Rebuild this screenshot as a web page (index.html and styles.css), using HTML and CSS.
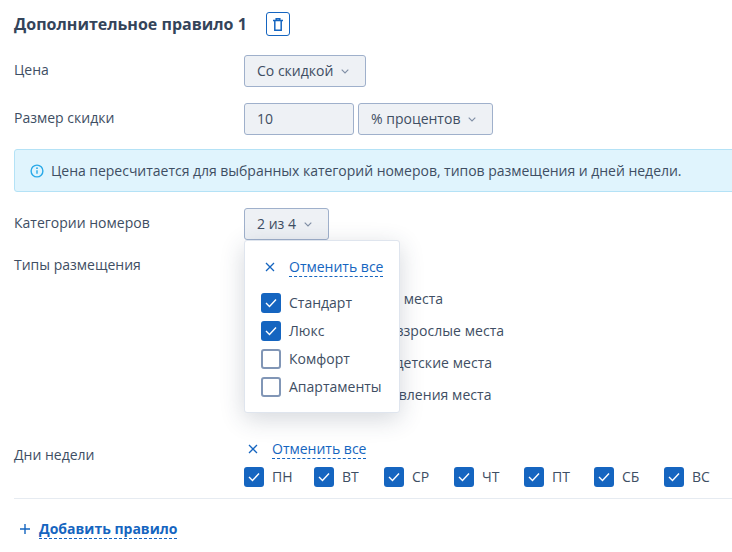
FILE: index.html
```
<!DOCTYPE html>
<html lang="ru">
<head>
<meta charset="utf-8">
<title>Дополнительное правило</title>
<link rel="stylesheet" href="styles.css">
</head>
<body>
<main class="page">
  <div class="rule-head">
    <h2 class="rule-title">Дополнительное правило 1</h2>
    <button class="icon-btn" type="button" aria-label="Удалить">
      <svg width="10" height="13" viewBox="0 0 10 13" fill="none" stroke="#1565c0" stroke-width="1.5"><path d="M0 2.5h10M3.2 2.4V.8h3.6v1.6M1.8 2.5v9.7h6.4V2.5"/></svg>
    </button>
  </div>

  <div class="row row-price">
    <div class="label">Цена</div>
    <button class="select" type="button">Со скидкой<svg class="chev" width="8" height="5" viewBox="0 0 8 5"><path d="M.7.7L4 4l3.3-3.3" fill="none" stroke="#7f8ea5" stroke-width="1.1"/></svg></button>
  </div>

  <div class="row row-discount">
    <div class="label">Размер скидки</div>
    <div class="input">10</div>
    <button class="select" type="button">% процентов<svg class="chev" width="8" height="5" viewBox="0 0 8 5"><path d="M.7.7L4 4l3.3-3.3" fill="none" stroke="#7f8ea5" stroke-width="1.1"/></svg></button>
  </div>

  <div class="alert">
    <svg width="14" height="14" viewBox="0 0 14 14" fill="none"><circle cx="7" cy="7" r="5.9" stroke="#29a9e8" stroke-width="1.4"/><path d="M7 6.2v3.6" stroke="#29a9e8" stroke-width="1.4"/><circle cx="7" cy="4.2" r=".9" fill="#29a9e8"/></svg>
    <span class="alert-text">Цена пересчитается для выбранных категорий номеров, типов размещения и дней недели.</span>
  </div>

  <div class="row row-cats">
    <div class="label">Категории номеров</div>
    <div class="dropdown">
      <button class="select" type="button">2 из 4<svg class="chev" width="8" height="5" viewBox="0 0 8 5"><path d="M.7.7L4 4l3.3-3.3" fill="none" stroke="#7f8ea5" stroke-width="1.1"/></svg></button>
      <div class="popup">
        <div class="cancel">
          <svg class="x" width="10" height="10" viewBox="0 0 10 10"><path d="M1 1l8 8M9 1L1 9" stroke="#1565c0" stroke-width="1.3"/></svg>
          <a class="dash">Отменить все</a>
        </div>
        <div class="popup-list">
          <label class="check"><span class="box on"><svg width="12" height="10" viewBox="0 0 12 10"><path d="M1 5l3.5 3.5L11 1.5" fill="none" stroke="#fff" stroke-width="1.4"/></svg></span>Стандарт</label>
          <label class="check"><span class="box on"><svg width="12" height="10" viewBox="0 0 12 10"><path d="M1 5l3.5 3.5L11 1.5" fill="none" stroke="#fff" stroke-width="1.4"/></svg></span>Люкс</label>
          <label class="check"><span class="box"></span>Комфорт</label>
          <label class="check"><span class="box"></span>Апартаменты</label>
        </div>
      </div>
    </div>
  </div>

  <div class="row row-types">
    <div class="label">Типы размещения</div>
    <div class="type-list">
      <label class="check"><span class="box on"></span>Основные детские места</label>
      <label class="check"><span class="box on"></span>Дополнительные взрослые места</label>
      <label class="check"><span class="box on"></span>Дополнительные детские места</label>
      <label class="check"><span class="box on"></span>Дети без предоставления места</label>
    </div>
  </div>

  <div class="row row-days">
    <div class="label">Дни недели</div>
    <div class="days-col">
      <div class="cancel">
        <svg class="x" width="10" height="10" viewBox="0 0 10 10"><path d="M1 1l8 8M9 1L1 9" stroke="#1565c0" stroke-width="1.3"/></svg>
        <a class="dash">Отменить все</a>
      </div>
      <div class="days">
        <label class="check"><span class="box on"><svg width="12" height="10" viewBox="0 0 12 10"><path d="M1 5l3.5 3.5L11 1.5" fill="none" stroke="#fff" stroke-width="1.4"/></svg></span>ПН</label>
        <label class="check"><span class="box on"><svg width="12" height="10" viewBox="0 0 12 10"><path d="M1 5l3.5 3.5L11 1.5" fill="none" stroke="#fff" stroke-width="1.4"/></svg></span>ВТ</label>
        <label class="check"><span class="box on"><svg width="12" height="10" viewBox="0 0 12 10"><path d="M1 5l3.5 3.5L11 1.5" fill="none" stroke="#fff" stroke-width="1.4"/></svg></span>СР</label>
        <label class="check"><span class="box on"><svg width="12" height="10" viewBox="0 0 12 10"><path d="M1 5l3.5 3.5L11 1.5" fill="none" stroke="#fff" stroke-width="1.4"/></svg></span>ЧТ</label>
        <label class="check"><span class="box on"><svg width="12" height="10" viewBox="0 0 12 10"><path d="M1 5l3.5 3.5L11 1.5" fill="none" stroke="#fff" stroke-width="1.4"/></svg></span>ПТ</label>
        <label class="check"><span class="box on"><svg width="12" height="10" viewBox="0 0 12 10"><path d="M1 5l3.5 3.5L11 1.5" fill="none" stroke="#fff" stroke-width="1.4"/></svg></span>СБ</label>
        <label class="check"><span class="box on"><svg width="12" height="10" viewBox="0 0 12 10"><path d="M1 5l3.5 3.5L11 1.5" fill="none" stroke="#fff" stroke-width="1.4"/></svg></span>ВС</label>
      </div>
    </div>
  </div>

  <div class="add">
    <svg width="10" height="10" viewBox="0 0 10 10"><path d="M5 0v10M0 5h10" stroke="#1565c0" stroke-width="1.4"/></svg>
    <a class="dash">Добавить правило</a>
  </div>
</main>
</body>
</html>
```
FILE: styles.css
```
* { box-sizing: border-box; }
html, body { margin: 0; height: 100%; overflow: hidden; background: #fff; }
body { font-family: "Open Sans", "Noto Sans", sans-serif; font-size: 14px; line-height: 20px; color: #3e4e63; }
.page { width: 732px; padding: 12px 0 0 14px; overflow: hidden; }
.rule-head { display: flex; align-items: center; gap: 19px; height: 24px; }
.rule-title { margin: 0; font-size: 16px; line-height: 20px; font-weight: 700; color: #34445a; }
.icon-btn { width: 24px; height: 24px; padding: 0; display: flex; align-items: center; justify-content: center; background: #fff; border: 1px solid #1565c0; border-radius: 3px; }
.row { display: flex; align-items: flex-start; }
.label { width: 230px; flex: none; }
.row-price { margin-top: 19px; }
.row-price .label, .row-discount .label { padding-top: 5px; }
.select { display: inline-flex; align-items: center; height: 32px; padding: 0 16px 0 12px; gap: 8px; font: inherit; color: #3e4e63; background: #eef1f5; border: 1px solid #9fb0cb; border-radius: 3px; }
.row-discount { margin-top: 16px; }
.input { width: 110px; height: 32px; padding: 5px 12px; margin-right: 4px; background: #eef1f5; border: 1px solid #9fb0cb; border-radius: 3px; }
.alert { display: flex; align-items: center; gap: 7px; width: 760px; height: 43px; margin-top: 14px; padding: 0 15px; background: #e0f4fd; border: 1px solid #b4e2f6; border-radius: 3px; }
.alert-text { letter-spacing: -.025px; }
.row-cats { margin-top: 16px; }
.row-cats .label { padding-top: 5px; }
.dropdown { position: relative; }
.popup { position: absolute; left: 0; top: 32px; width: 156px; height: 173px; padding: 16px 0 0 16px; background: #fff; border: 1px solid #dfe5ee; border-radius: 3px; box-shadow: 0 6px 24px rgba(40, 55, 80, .2); z-index: 5; }
.cancel { display: flex; align-items: center; gap: 14px; padding-left: 4px; }
.x { flex: none; }
.dash { color: #1565c0; border-bottom: 1px dashed #1565c0; line-height: 19px; }
.popup-list { display: flex; flex-direction: column; gap: 8px; margin-top: 16px; }
.check { display: flex; align-items: center; gap: 8px; white-space: nowrap; }
.box { flex: none; width: 20px; height: 20px; display: flex; align-items: center; justify-content: center; background: #fff; border: 2px solid #8196b6; border-radius: 3px; }
.box.on { background: #1565c0; border: 0; }
.row-types { margin-top: 15px; }
.type-list { display: flex; flex-direction: column; gap: 12px; margin-top: 24px; padding-top: 10px; letter-spacing: .05px; }
.row-days { margin-top: 34px; }
.row-days .label { padding-top: 6px; }
.days-col { display: flex; flex-direction: column; gap: 8px; }
.days { display: flex; }
.days .check { width: 70px; }
.add { display: flex; align-items: center; gap: 9px; margin-top: 11px; padding: 20px 0 0 6px; border-top: 1px solid #e6ebf1; font-weight: 700; }
```
